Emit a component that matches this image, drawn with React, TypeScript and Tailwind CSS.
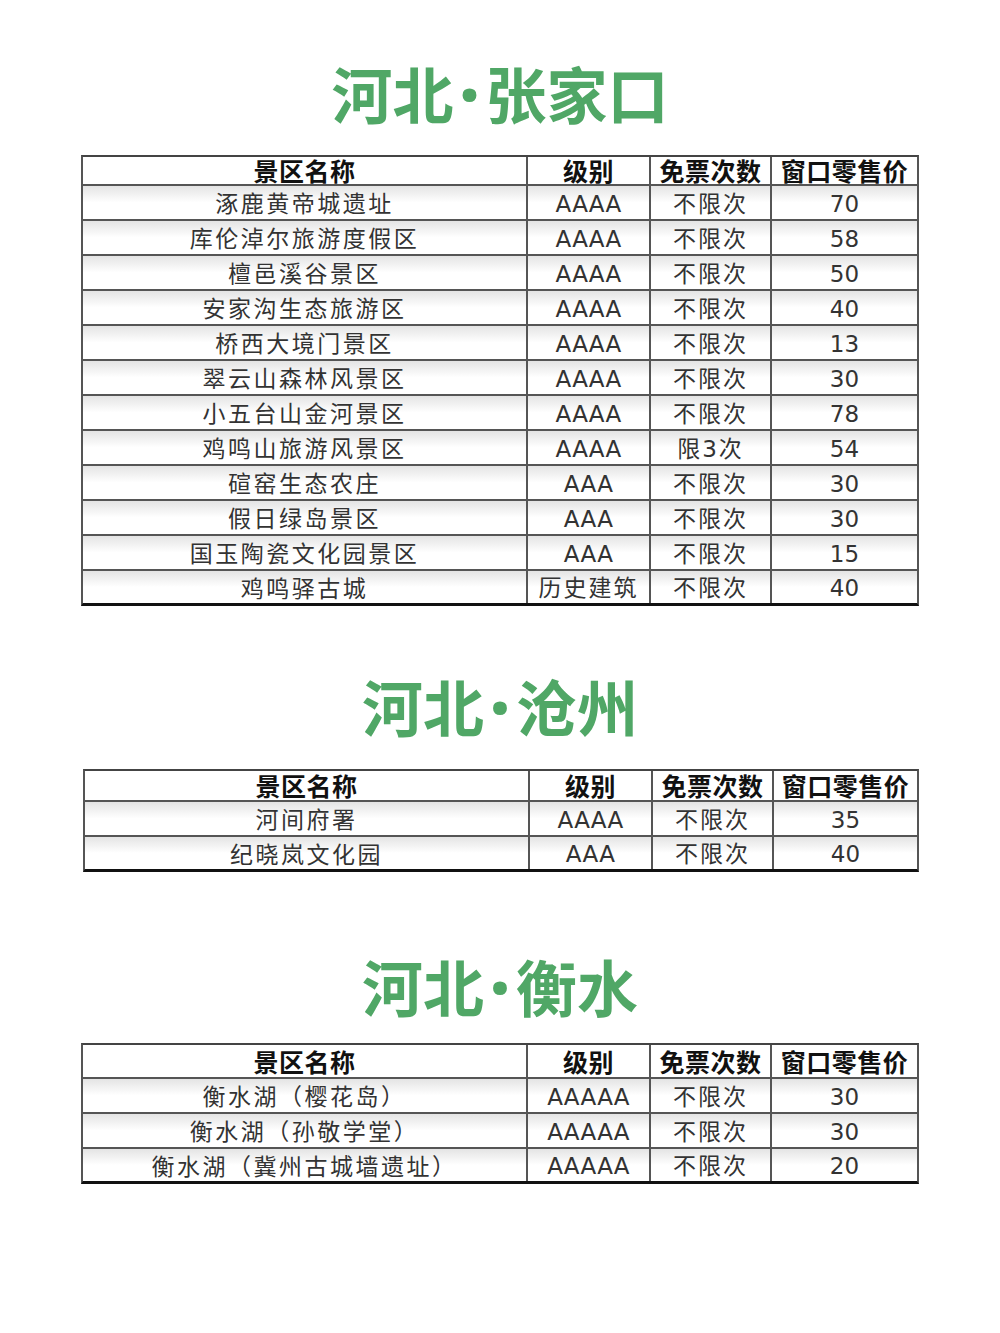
const CJK = "font-['Noto_Sans_CJK_SC','Noto_Sans',sans-serif]";
const MIXED = "font-['DejaVu_Sans','Noto_Sans_CJK_SC',sans-serif]";

type Row = [string, string, string, string];

const zhangjiakou: Row[] = [
  ["涿鹿黄帝城遗址", "AAAA", "不限次", "70"],
  ["库伦淖尔旅游度假区", "AAAA", "不限次", "58"],
  ["檀邑溪谷景区", "AAAA", "不限次", "50"],
  ["安家沟生态旅游区", "AAAA", "不限次", "40"],
  ["桥西大境门景区", "AAAA", "不限次", "13"],
  ["翠云山森林风景区", "AAAA", "不限次", "30"],
  ["小五台山金河景区", "AAAA", "不限次", "78"],
  ["鸡鸣山旅游风景区", "AAAA", "限3次", "54"],
  ["碹窑生态农庄", "AAA", "不限次", "30"],
  ["假日绿岛景区", "AAA", "不限次", "30"],
  ["国玉陶瓷文化园景区", "AAA", "不限次", "15"],
  ["鸡鸣驿古城", "历史建筑", "不限次", "40"],
];

const cangzhou: Row[] = [
  ["河间府署", "AAAA", "不限次", "35"],
  ["纪晓岚文化园", "AAA", "不限次", "40"],
];

const hengshui: Row[] = [
  ["衡水湖（樱花岛）", "AAAAA", "不限次", "30"],
  ["衡水湖（孙敬学堂）", "AAAAA", "不限次", "30"],
  ["衡水湖（冀州古城墙遗址）", "AAAAA", "不限次", "20"],
];

function Title({ province, city }: { province: string; city: string }) {
  return (
    <h1 className={`${CJK} flex items-center justify-center h-[60px] text-[61px] leading-[60px] font-bold text-[#50a766]`}>
      <span>{province}</span>
      <span className="inline-flex items-center justify-center w-[32px] h-[60px] text-[80px] leading-none font-['Noto_Sans',sans-serif]">
        ·
      </span>
      <span>{city}</span>
    </h1>
  );
}

function cellClass(i: number, value: string) {
  if (i === 0) return `${CJK} text-[23px] tracking-[2.5px]`;
  if (i === 1)
    return /^[A-Z]+$/.test(value)
      ? `${MIXED} text-[23px] tracking-[0.3px] pt-[3px]`
      : `${MIXED} text-[23px] tracking-[2px] pt-[3px]`;
  if (i === 2) return `${MIXED} text-[23px] tracking-[2px] pt-[3px]`;
  return `${MIXED} text-[23px] pt-[3px]`;
}

function PriceTable({ rows, headH, offset = 0 }: { rows: Row[]; headH: string; offset?: number }) {
  return (
    <div
      className="border-t-2 border-b-[3px] border-l-2 border-r-2 border-t-[#444] border-b-[#111] border-x-[#555]"
      style={{ marginLeft: 81 + offset, width: 838 - offset }}
    >
      <div className={`grid grid-cols-[445px_123px_121px_1fr] ${headH} border-b-2 border-[#555]`}>
        {["景区名称", "级别", "免票次数", "窗口零售价"].map((h, i) => (
          <div
            key={h}
            className={`${CJK} flex items-center justify-center leading-none text-[25px] font-bold text-[#111] tracking-[0.5px] ${
              i < 3 ? "border-r-2 border-[#555]" : ""
            }`}
          >
            {h}
          </div>
        ))}
      </div>
      {rows.map((r, ri) => {
        const last = ri === rows.length - 1;
        return (
          <div
            key={r[0]}
            className={`grid grid-cols-[445px_123px_121px_1fr] bg-gradient-to-b from-[#e4e4e4] via-white to-white ${
              last ? "h-[32px]" : "h-[35px] border-b-2 border-[#555]"
            }`}
          >
            {r.map((c, i) => (
              <div
                key={i}
                className={`flex items-center justify-center leading-none text-[#333] ${cellClass(i, c)} ${
                  i < 3 ? "border-r-2 border-[#555]" : ""
                }`}
              >
                {c}
              </div>
            ))}
          </div>
        );
      })}
    </div>
  );
}

export default function App() {
  return (
    <div className="bg-white w-[1000px] h-[1333px] pt-[63px]">
      <Title province="河北" city="张家口" />
      <div className="mt-[32px]">
        <PriceTable rows={zhangjiakou} headH="h-[29px]" />
      </div>
      <div className="mt-[70px]">
        <Title province="河北" city="沧州" />
      </div>
      <div className="mt-[33px]">
        <PriceTable rows={cangzhou} headH="h-[31px]" offset={2} />
      </div>
      <div className="mt-[84px]">
        <Title province="河北" city="衡水" />
      </div>
      <div className="mt-[27px]">
        <PriceTable rows={hengshui} headH="h-[34px]" />
      </div>
    </div>
  );
}
